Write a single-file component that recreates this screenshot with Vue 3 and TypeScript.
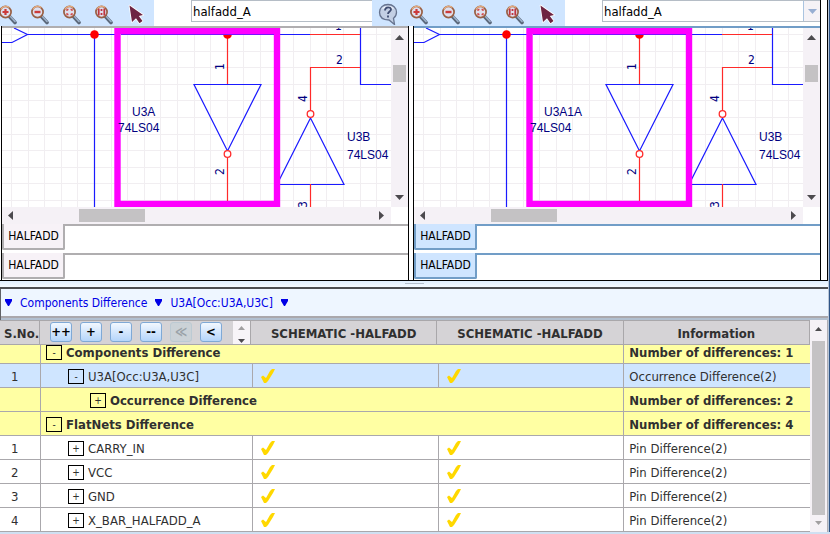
<script setup lang="ts">
import { ref } from 'vue'

type Row = {
  no: string
  level: number
  open: boolean
  label: string
  info: string
  kind: 'group' | 'selected' | 'item'
}

const panes = [
  { id: 'left', part: 'U3A', active: false },
  { id: 'right', part: 'U3A1A', active: true },
]

const zoomTools = ['Zoom in', 'Zoom out', 'Zoom to fit', 'Zoom selection']
const sheet = ref<Record<string, string>>({ left: 'halfadd_A', right: 'halfadd_A' })

const vGrid = Array.from({ length: 24 }, (_, i) => Math.round(11 + i * 16.6) + 0.5)
const hGrid = Array.from({ length: 11 }, (_, i) => Math.round(34 + i * 16.6) + 0.5)

const treeButtons = [
  { text: '++', label: 'Expand all', off: false },
  { text: '+', label: 'Expand', off: false },
  { text: '-', label: 'Collapse', off: false },
  { text: '--', label: 'Collapse all', off: false },
  { text: '≪', label: 'First', off: true },
  { text: '<', label: 'Previous', off: false },
]

const rows: Row[] = [
  { no: '', level: 0, open: true, label: 'Components Difference', info: 'Number of differences: 1', kind: 'group' },
  { no: '1', level: 1, open: true, label: 'U3A[Occ:U3A,U3C]', info: 'Occurrence Difference(2)', kind: 'selected' },
  { no: '', level: 2, open: false, label: 'Occurrence Difference', info: 'Number of differences: 2', kind: 'group' },
  { no: '', level: 0, open: true, label: 'FlatNets Difference', info: 'Number of differences: 4', kind: 'group' },
  { no: '1', level: 1, open: false, label: 'CARRY_IN', info: 'Pin Difference(2)', kind: 'item' },
  { no: '2', level: 1, open: false, label: 'VCC', info: 'Pin Difference(2)', kind: 'item' },
  { no: '3', level: 1, open: false, label: 'GND', info: 'Pin Difference(2)', kind: 'item' },
  { no: '4', level: 1, open: false, label: 'X_BAR_HALFADD_A', info: 'Pin Difference(2)', kind: 'item' },
]
</script>

<template>
  <div class="window">
    <main class="main">
      <section class="compare">
        <div class="toolbars">
          <div v-for="p in panes" :key="p.id" class="toolbar" :class="p.id">
            <div class="tools">
              <button v-if="p.active" class="tool" aria-label="Help">
                <svg width="20" height="24" viewBox="0 0 20 24">
                  <path d="M10 3.500c5 0 8.500 3.300 8.500 7.800 0 3-1.500 5-3 6l1 6.200-5.500-4.500C5 19 1.500 16 1.500 11.300S5 3.500 10 3.500z" fill="#c3cfe4" stroke="#66738f" stroke-width="1.300" />
                  <path d="M4 8c2-4 10-4 12 0-4-1.500-8-1.500-12 0z" fill="#f3f7ff" />
                  <path d="M7 9.500c0-4 6-4 6-1 0 2-3 2-3 4.500M10 14.500v2" fill="none" stroke="#3f4c70" stroke-width="1.800" />
                </svg>
              </button>
              <button v-for="(t, i) in zoomTools" :key="t" class="tool" :aria-label="t">
                <svg width="20" height="24" viewBox="0 0 20 24">
                  <path d="M10.500 15.500l5.500 6" stroke="#5a6779" stroke-width="3.600" stroke-linecap="round" />
                  <path d="M11.500 15.500l4.500 5" stroke="#9db2cb" stroke-width="1.600" stroke-linecap="round" />
                  <circle cx="6.500" cy="11" r="5.600" fill="#dfe0ee" stroke="#9a6044" stroke-width="1.700" />
                  <path d="M1.800 8.500a5.500 5.500 0 0 1 8.500-2" fill="none" stroke="#e8b184" stroke-width="1.100" />
                  <path v-if="i === 0" d="M3.500 11h6M6.500 8v6" stroke="#cc3b3b" stroke-width="2.200" />
                  <path v-else-if="i === 1" d="M3.500 11h6" stroke="#cc3b3b" stroke-width="2.400" />
                  <path v-else-if="i === 2" d="M4 10V8.500h1.500M7.500 8.500H9V10M9 12v1.500H7.500M5.500 13.500H4V12" fill="none" stroke="#d24a4a" stroke-width="1.300" />
                  <path v-else d="M3.700 7.500v7M9.300 7.500v7M6.500 8v2M6.500 12v2" stroke="#bf3540" stroke-width="1.800" />
                </svg>
              </button>
              <button class="tool" aria-label="Select">
                <svg width="20" height="24" viewBox="0 0 20 24">
                  <path d="M2.500 4.500L16 14l-4.200 1 3.700 5-3 2.200L9 17.200 5 21z" fill="#6e2442" stroke="#fff" stroke-width="1.600" stroke-linejoin="round" paint-order="stroke" />
                </svg>
              </button>
            </div>
            <label class="picker">
              <select v-model="sheet[p.id]" :aria-label="'Schematic page, ' + p.id">
                <option>halfadd_A</option>
              </select>
              <span class="picker-arrow"><svg width="9" height="5" viewBox="0 0 9 5"><path d="M0 0h9L4.500 5z" fill="#97aed2" /></svg></span>
            </label>
          </div>
        </div>

        <div class="panes">
          <article v-for="p in panes" :key="p.id" class="pane" :class="{ active: p.active }">
            <div class="view">
              <svg class="drawing" viewBox="2 28 389 179" preserveAspectRatio="xMinYMin slice">
                <g stroke="#f1eef1">
                  <line v-for="x in vGrid" :key="'v' + x" :x1="x" :x2="x" y1="28" y2="207" />
                  <line v-for="y in hGrid" :key="'h' + y" x1="2" x2="391" :y1="y" :y2="y" />
                </g>
                <g fill="none" stroke="#1a1aff" stroke-width="1.200">
                  <path d="M14 28l13.500 6.500L12 42.500H2M27 34.500h88M94.500 34v173M280 34.500h30M360.500 28v56.500H391" />
                  <path d="M194 84.500h67L227.500 151zM310.500 118L277 184.500h67z" />
                </g>
                <g fill="none" stroke="#ff2a2a" stroke-width="1.200">
                  <path d="M310 34.500h50M360 67.500h-49.500v43M227.500 34v50M227.500 158v44M310.500 184v23" />
                </g>
                <circle cx="94.500" cy="34.500" r="4.300" fill="red" />
                <circle cx="227.500" cy="34.500" r="4.300" fill="red" />
                <g fill="#fff" stroke="#ff2a2a" stroke-width="1.300">
                  <circle cx="227.500" cy="154" r="3.300" />
                  <circle cx="310.500" cy="114" r="3.300" />
                </g>
                <rect x="117.500" y="31" width="159.500" height="173" fill="none" stroke="#f0f" stroke-width="6.400" />
                <path d="M121 34.500h153" stroke="#7a10ff" />
                <g class="part">
                  <text x="132" y="116">{{ p.part }}</text>
                  <text x="118" y="132">74LS04</text>
                  <text x="347" y="141">U3B</text>
                  <text x="347" y="159">74LS04</text>
                </g>
                <g class="pin">
                  <text x="335" y="30">1</text>
                  <text x="336" y="64">2</text>
                  <text transform="translate(224 70) rotate(-90)">1</text>
                  <text transform="translate(224 175) rotate(-90)">2</text>
                  <text transform="translate(307 102) rotate(-90)">4</text>
                  <text transform="translate(307 208) rotate(-90)">3</text>
                </g>
              </svg>
              <div class="vscroll">
                <svg width="9" height="5" viewBox="0 0 9 5"><path d="M4.500 0L9 5H0z" /></svg>
                <i class="thumb"></i>
                <svg width="9" height="5" viewBox="0 0 9 5"><path d="M0 0h9L4.500 5z" /></svg>
              </div>
            </div>
            <div class="hscroll">
              <svg width="5" height="9" viewBox="0 0 5 9"><path d="M5 0v9L0 4.500z" /></svg>
              <i class="thumb"></i>
              <svg width="5" height="9" viewBox="0 0 5 9"><path d="M0 0v9l5-4.500z" /></svg>
            </div>
            <div class="tabs"><button class="tab">HALFADD</button></div>
            <div class="tabs"><button class="tab">HALFADD</button></div>
          </article>
        </div>
      </section>

      <div class="splitter"><i></i></div>

      <nav class="crumbs">
        <svg width="7" height="7" viewBox="0 0 7 7"><path d="M0 0h7v2L4 7H3L0 2z" /></svg>
        <a href="#">Components Difference</a>
        <svg width="7" height="7" viewBox="0 0 7 7"><path d="M0 0h7v2L4 7H3L0 2z" /></svg>
        <a href="#">U3A[Occ:U3A,U3C]</a>
        <svg width="7" height="7" viewBox="0 0 7 7"><path d="M0 0h7v2L4 7H3L0 2z" /></svg>
      </nav>

      <section class="report">
        <div class="tables">
          <table class="head">
            <colgroup><col class="c-no" /><col class="c-tree" /><col /><col /><col /></colgroup>
            <thead>
              <tr>
                <th>S.No.</th>
                <th class="controls">
                  <div class="control-row">
                    <button v-for="b in treeButtons" :key="b.text" class="step" :disabled="b.off" :aria-label="b.label">{{ b.text }}</button>
                    <span class="mini-scroll">
                      <svg width="7" height="4" viewBox="0 0 7 4"><path d="M3.500 0L7 4H0z" fill="#a19fa1" /></svg>
                      <svg width="7" height="4" viewBox="0 0 7 4"><path d="M0 0h7L3.500 4z" /></svg>
                    </span>
                  </div>
                </th>
                <th>SCHEMATIC -HALFADD</th>
                <th>SCHEMATIC -HALFADD</th>
                <th>Information</th>
              </tr>
            </thead>
          </table>
          <div class="body-clip">
            <table class="body">
              <colgroup><col class="c-no" /><col class="c-tree" /><col /><col /><col /></colgroup>
              <tbody>
                <tr v-for="(r, i) in rows" :key="i" :class="r.kind">
                  <td class="no">{{ r.no }}</td>
                  <td :colspan="r.kind === 'group' ? 3 : 1">
                    <div class="node" :class="'level-' + r.level">
                      <button class="toggle" :aria-label="'Toggle ' + r.label">{{ r.open ? '-' : '+' }}</button>
                      <span>{{ r.label }}</span>
                    </div>
                  </td>
                  <template v-if="r.kind !== 'group'">
                    <td v-for="n in 2" :key="n" class="mark">
                      <svg width="14" height="14" viewBox="0 0 14 14"><path d="M0 8l2-1.500L5 9l4-7 2-2h3l-2 4-5 8-2 2H3z" fill="#ffd800" /></svg>
                    </td>
                  </template>
                  <td class="info">{{ r.info }}</td>
                </tr>
              </tbody>
            </table>
          </div>
        </div>
        <div class="vscroll table-scroll">
          <svg width="7" height="4" viewBox="0 0 7 4"><path d="M3.500 0L7 4H0z" /></svg>
          <i class="thumb"></i>
          <svg width="7" height="4" viewBox="0 0 7 4"><path d="M0 0h7L3.500 4z" fill="#a19fa1" /></svg>
        </div>
      </section>
    </main>
  </div>
</template>

<style>
body {
  background: #cfe0f2;
}
</style>

<style scoped>
.window,
.window * {
  box-sizing: border-box;
}
.window {
  font: 13px/16px 'DejaVu Sans Condensed', 'Noto Sans', sans-serif;
  color: #303030;
  border-right: 1px solid #2f5587;
  overflow: hidden;
}
.main {
  border-right: 1px solid #b9c6d8;
}
button {
  font: inherit;
  color: inherit;
  padding: 0;
  border: 0;
  background: none;
}
svg {
  display: block;
  flex: none;
}
.compare {
  background: #fff;
  border-right: 1px solid #000;
  border-bottom: 1px solid #000;
  padding-right: 6px;
}
.toolbars {
  display: flex;
  height: 26px;
  border-right: 1px solid #000;
}
.toolbar {
  display: flex;
  gap: 37px;
  overflow: hidden;
  flex: 448 1 0;
}
.toolbar.left {
  flex-grow: 372;
}
.tools {
  display: flex;
  flex: none;
  background: #cfe5ff;
  padding-right: 1px;
}
.tool {
  width: 32px;
  height: 26px;
  padding-left: 6px;
}
.left .tool:first-child {
  width: 25px;
  padding-left: 0;
}
.left .tool:first-child svg {
  margin-left: -1px;
}
.picker {
  display: flex;
  flex: 1 0 217px;
  height: 22px;
  border: 1px solid #b5bdc6;
  border-right: 0;
  background: #fff;
}
select {
  appearance: none;
  flex: 1;
  min-width: 0;
  border: 0;
  padding: 1px 1px 0;
  background: none;
  font: inherit;
  color: #000;
  outline: 0;
}
.picker-arrow {
  width: 17px;
  display: grid;
  place-items: center;
  background: #f5f2f6;
  border-left: 1px solid #aac4e0;
}
.panes {
  display: flex;
  gap: 4px;
  padding-left: 1px;
}
.pane {
  --edge: #b0aeb0;
  --tab: #f7f2f7;
  flex: 1;
  min-width: 0;
  border: solid #000;
  border-width: 0 1px;
}
.pane.active {
  --edge: #719dc7;
  --tab: #cfe5ff;
}
.view {
  display: flex;
  border-top: 2px solid var(--edge);
  height: 181px;
}
.drawing {
  flex: 1;
  min-width: 0;
  height: 179px;
}
.part {
  font: 12px 'Liberation Sans', sans-serif;
  fill: #000080;
}
.pin {
  font: 12px 'DejaVu Sans Condensed', sans-serif;
  fill: #000080;
}
.vscroll {
  display: flex;
  flex-direction: column;
  align-items: center;
  width: 17px;
  padding: 7px 0;
  background: #f5f1f6;
  fill: #4c4a4e;
}
.thumb {
  background: #c4c2c4;
}
.view .thumb {
  width: 13px;
  height: 17px;
  margin: 25px 0 auto;
}
.hscroll {
  display: flex;
  align-items: center;
  height: 17px;
  margin-right: 17px;
  padding: 0 7px 0 6px;
  background: #f5f1f6;
  fill: #4c4a4e;
}
.hscroll .thumb {
  width: 66px;
  height: 13px;
  margin: 0 auto 0 66px;
}
.tabs {
  display: flex;
  height: 29px;
  background: linear-gradient(var(--edge), var(--edge)) 62px 0 / 100% 2px no-repeat;
}
.tabs:last-child {
  height: 27px;
}
.tab {
  width: 63px;
  height: 26px;
  border: 2px solid var(--edge);
  border-top-width: 0;
  border-radius: 0 0 2px 2px;
  background: var(--tab);
  color: #000;
  font-size: 12px;
}
.splitter {
  height: 8px;
  background: linear-gradient(#dfefff, #f4faff);
  border-bottom: 2px solid #4c4e52;
  display: flex;
  justify-content: center;
  padding-top: 2px;
}
.splitter i {
  width: 19px;
  height: 1px;
  background: #b4bfcc;
}
.crumbs {
  display: flex;
  align-items: center;
  gap: 8px;
  height: 31px;
  padding: 0 4px 4px;
  background: #eef6ff;
  border: solid #606266;
  border-width: 0 0 0 1px;
  box-shadow: inset 0 -2px #b2c0d0, inset 0 -4px #aaa8ac;
  fill: #0000e6;
  font-size: 12px;
}
.crumbs a {
  color: #0000e6;
  text-decoration: none;
}
.report {
  display: flex;
  border-right: 1px solid #b0aeb4;
}
.tables {
  flex: 1;
  min-width: 0;
}
table {
  width: 100%;
  table-layout: fixed;
  border-collapse: separate;
  border-spacing: 0;
}
.c-no {
  width: 41px;
}
.c-tree {
  width: 212px;
}
.head .c-no {
  width: 40px;
}
.head .c-tree {
  width: 211px;
}
th {
  height: 25px;
  padding: 2px 0 0;
  background: #d5d3d6;
  border: solid #a9a7aa;
  border-width: 1px 1px 1px 0;
}
th:first-child {
  padding-left: 4px;
}
.controls {
  padding: 0;
}
.control-row {
  display: flex;
  gap: 8px;
  height: 23px;
  padding-left: 10px;
}
.step {
  width: 22px;
  height: 20px;
  margin-top: 1px;
  border: 1px solid #7fa9d6;
  border-radius: 3px;
  background: linear-gradient(#f2f8ff, #b5d5fa);
  color: #000;
  line-height: 16px;
  font-weight: 700;
}
.step:disabled {
  border-color: #bccad3;
  background: #cbd2d7;
  color: #9aa2a8;
}
.mini-scroll {
  display: flex;
  flex-direction: column;
  justify-content: space-between;
  align-items: center;
  flex: 1;
  margin-left: 3px;
  padding: 5px 0 1px;
  background: #f7f4f8;
  fill: #4c4a4e;
}
.body-clip {
  overflow: hidden;
}
.body {
  margin-top: -5px;
}
td {
  height: 24px;
  padding: 2px 4px 0 5px;
  background: #fff;
  border: solid #aaa8ac;
  border-width: 0 1px 1px 0;
  white-space: nowrap;
}
td:last-child {
  border-right: 0;
}
.group td {
  background: #ffffa3;
  font-weight: 700;
}
.selected td {
  background: #cfe5ff;
}
td.no {
  padding-left: 11px;
}
.node {
  display: flex;
  align-items: center;
  gap: 4px;
}
.level-1 {
  padding-left: 22px;
}
.level-2 {
  padding-left: 44px;
}
.toggle {
  width: 16px;
  height: 15px;
  border: 1px solid #000;
  font-size: 10px;
  line-height: 12px;
  font-weight: 400;
  background: none;
}
td.mark {
  padding: 0 8px;
}
.table-scroll .thumb {
  width: 13px;
  flex: 1;
  margin: 10px 0 6px;
}
</style>
